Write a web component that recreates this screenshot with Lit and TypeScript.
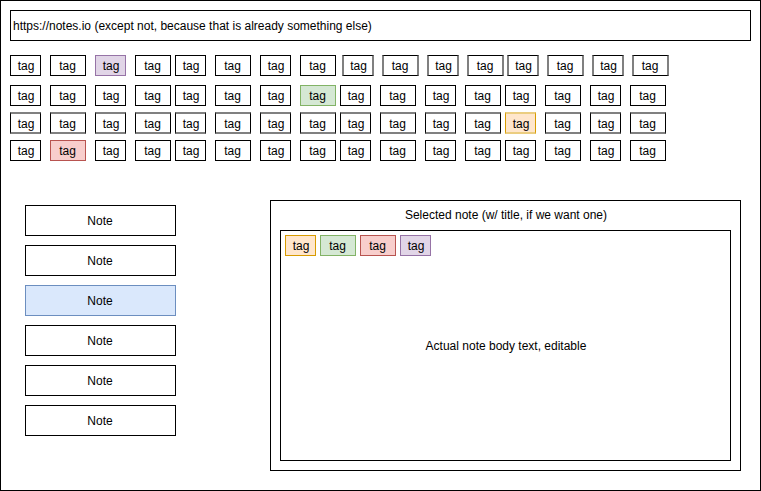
import { LitElement, html, css } from "lit";
import { customElement, property, state } from "lit/decorators.js";
import { classMap } from "lit/directives/class-map.js";

type Tone = "plain" | "purple" | "green" | "orange" | "red";

interface TagRow {
  soft: boolean;
  shifted: boolean;
  marked: number;
  tone: Tone;
}

const ROWS: TagRow[] = [
  { soft: false, shifted: true, marked: 2, tone: "purple" },
  { soft: false, shifted: false, marked: 7, tone: "green" },
  { soft: true, shifted: false, marked: 12, tone: "orange" },
  { soft: false, shifted: false, marked: 1, tone: "red" },
];

@customElement("note-tag")
class NoteTag extends LitElement {
  @property() tone: Tone = "plain";
  @property({ type: Boolean }) wide = false;
  @property() soft = "";

  static styles = css`
    :host {
      display: block;
    }
    .tag {
      display: block;
      box-sizing: border-box;
      width: 31px;
      height: 21px;
      margin: 0;
      padding: 2px 0 0 1px;
      border: 1px solid #000;
      border-radius: 0;
      background: #fff;
      color: #000;
      font: 12px/17px "Liberation Sans", Arial, sans-serif;
      text-align: center;
    }
    .wide {
      width: 36px;
      padding: 2px 1px 0 0;
    }
    .purple {
      background: #e1d5e7;
      border-color: #9673a6;
    }
    .green {
      background: #d5e8d4;
      border-color: #82b366;
    }
    .orange {
      background: #ffe6cc;
      border-color: #d79b00;
    }
    .red {
      background: #f8cecc;
      border-color: #b85450;
    }
    .soft-y {
      height: 22px;
      border-top: 2px solid #808080;
      border-bottom: 2px solid #808080;
    }
    .soft-y.orange {
      border-top-color: #ebcd80;
      border-bottom-color: #ebcd80;
    }
    .soft-x {
      width: 32px;
      border-left: 2px solid #808080;
      border-right: 2px solid #808080;
    }
    .soft-x.wide {
      width: 37px;
    }
  `;

  render() {
    const classes = {
      tag: true,
      wide: this.wide,
      [this.tone]: true,
      "soft-x": this.soft === "x",
      "soft-y": this.soft === "y",
    };
    return html`<button type="button" class=${classMap(classes)}>tag</button>`;
  }
}

@customElement("app-root")
class AppRoot extends LitElement {
  @state() private selected = 2;

  static styles = css`
    :host {
      display: flex;
      flex-direction: column;
      box-sizing: border-box;
      min-height: 100vh;
      padding: 9px;
      border: 1px solid #000;
      background: #fff;
      color: #000;
      font: 12px/14px "Liberation Sans", Arial, sans-serif;
    }
    .address {
      box-sizing: border-box;
      width: 100%;
      height: 31px;
      margin: 0;
      padding: 0 2px;
      border: 1px solid #000;
      border-radius: 0;
      background: #fff;
      color: #000;
      font: inherit;
    }
    .cloud {
      display: flex;
      flex-direction: column;
      gap: 6px;
      margin-top: 14px;
    }
    .row {
      display: flex;
      gap: 4px;
    }
    .row:first-child {
      margin-bottom: 3px;
    }
    .group {
      display: flex;
      gap: 9px;
    }
    .half {
      display: flex;
      gap: 4px;
    }
    .shifted {
      gap: 3px;
      margin-left: 2px;
    }
    .shifted .group {
      gap: 8px;
    }
    .main {
      display: flex;
      flex: 1;
      gap: 94px;
      margin: 39px 10px 10px 15px;
    }
    .notes {
      display: flex;
      flex-direction: column;
      gap: 9px;
      width: 151px;
      padding-top: 5px;
    }
    .note {
      height: 31px;
      margin: 0;
      padding: 0 1px 0 0;
      border: 1px solid #000;
      border-radius: 0;
      background: #fff;
      color: #000;
      font: inherit;
      text-align: center;
    }
    .selected {
      background: #dae8fc;
      border-color: #6c8ebf;
    }
    .panel {
      display: flex;
      flex: 1;
      flex-direction: column;
      padding: 0 9px 9px;
      border: 1px solid #000;
    }
    .title {
      margin: 0;
      padding-left: 1px;
      font: inherit;
      line-height: 29px;
      text-align: center;
    }
    .body {
      display: grid;
      flex: 1;
      border: 1px solid #000;
    }
    .applied {
      display: flex;
      grid-area: 1 / 1;
      gap: 4px;
      align-self: start;
      justify-self: start;
      padding: 4px;
    }
    .text {
      grid-area: 1 / 1;
      align-self: center;
      box-sizing: border-box;
      width: 100%;
      margin: 0;
      padding: 0 0 0 1px;
      border: 0;
      background: transparent;
      color: #000;
      font: inherit;
      text-align: center;
      resize: none;
      overflow: hidden;
      field-sizing: content;
    }
  `;

  private renderGroup(row: TagRow, group: number, soft: string) {
    return html`<div class="group">
      ${[0, 1, 2, 3].map((i) => {
        const tone = group * 4 + i === row.marked ? row.tone : "plain";
        return html`<note-tag tone=${tone} soft=${soft} ?wide=${i % 2 === 1}></note-tag>`;
      })}
    </div>`;
  }

  private renderRow(row: TagRow) {
    const soft = row.soft ? "y" : "";
    return html`<div class="row">
      <div class="half">${[0, 1].map((g) => this.renderGroup(row, g, soft))}</div>
      <div class=${classMap({ half: true, shifted: row.shifted })}>
        ${[2, 3].map((g) => this.renderGroup(row, g, row.shifted ? "x" : soft))}
      </div>
    </div>`;
  }

  render() {
    return html`
      <input
        class="address"
        type="text"
        aria-label="Address"
        .value=${"https://notes.io (except not, because that is already something else)"}
      />
      <div class="cloud">${ROWS.map((row) => this.renderRow(row))}</div>
      <div class="main">
        <nav class="notes">
          ${[0, 1, 2, 3, 4, 5].map(
            (i) => html`<button
              type="button"
              class=${classMap({ note: true, selected: i === this.selected })}
              @click=${() => (this.selected = i)}
            >Note</button>`
          )}
        </nav>
        <section class="panel">
          <h2 class="title" id="title">Selected note (w/ title, if we want one)</h2>
          <div class="body">
            <textarea
              class="text"
              rows="1"
              aria-labelledby="title"
              .value=${"Actual note body text, editable"}
            ></textarea>
            <div class="applied">
              <note-tag tone="orange"></note-tag>
              <note-tag tone="green" wide></note-tag>
              <note-tag tone="red" wide></note-tag>
              <note-tag tone="purple"></note-tag>
            </div>
          </div>
        </section>
      </div>
    `;
  }
}
